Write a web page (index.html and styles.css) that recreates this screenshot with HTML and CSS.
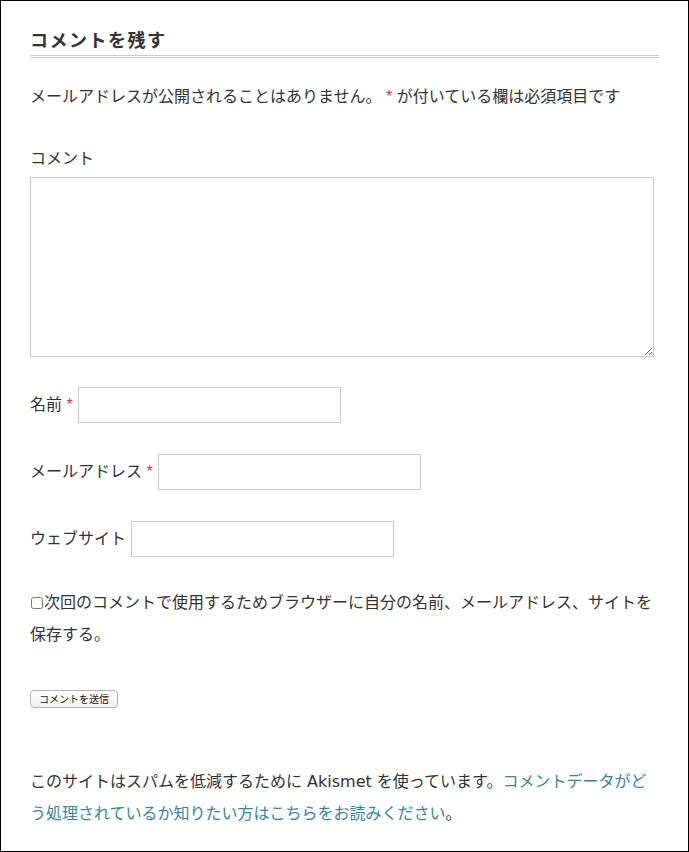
FILE: index.html
```html
<!DOCTYPE html>
<html lang="ja">
<head>
    <meta charset="UTF-8">
    <meta name="viewport" content="width=device-width, initial-scale=1.0">
    <title>コメントを残す</title>
    <link rel="stylesheet" href="styles.css">
</head>
<body>
    <div class="page">
        <div class="comment-respond">
            <h3 class="reply-title">コメントを残す</h3>

            <form class="comment-form" action="#" method="post">
                <p class="comment-notes">
                    <span>メールアドレスが公開されることはありません。</span> <span class="required">*</span> が付いている欄は必須項目です
                </p>

                <label class="comment-label" for="comment">コメント</label>
                <textarea class="comment-text" id="comment" name="comment"></textarea>

                <div class="field field-author">
                    <label for="author">名前 <span class="required">*</span></label>
                    <input type="text" id="author" name="author">
                </div>

                <div class="field field-email">
                    <label for="email">メールアドレス <span class="required">*</span></label>
                    <input type="text" id="email" name="email">
                </div>

                <div class="field field-url">
                    <label for="url">ウェブサイト</label>
                    <input type="text" id="url" name="url">
                </div>

                <p class="cookies-consent">
                    <input type="checkbox" id="cookies" name="cookies"><label for="cookies">次回のコメントで使用するためブラウザーに自分の名前、メールアドレス、サイトを保存する。</label>
                </p>

                <div class="form-submit">
                    <button type="submit" class="submit-btn">コメントを送信</button>
                </div>
            </form>

            <p class="akismet-notice">このサイトはスパムを低減するために Akismet を使っています。<a href="#">コメントデータがどう処理されているか知りたい方はこちらをお読みください</a>。</p>
        </div>
    </div>
</body>
</html>
```

FILE: styles.css
```css
* {
    margin: 0;
    padding: 0;
    box-sizing: border-box;
}

body {
    background: #fff;
    color: #333;
    font-family: 'Liberation Sans', 'Noto Sans CJK JP', sans-serif;
    font-size: 16px;
    line-height: 32px;
}

.page {
    height: 852px;
    border: 1px solid #000;
    padding: 27px 29px 0;
}

.reply-title {
    font-size: 18px;
    font-weight: bold;
    line-height: 27px;
    letter-spacing: 1.5px;
    color: #333;
    padding-bottom: 0;
    border-bottom: 3px double #ccc;
}

.comment-form {
    display: flex;
    flex-direction: column;
    align-items: flex-start;
}

.comment-notes {
    margin-top: 23px;
}

.required {
    color: #dd3344;
}

.comment-label {
    display: block;
    margin-top: 30px;
}

.comment-text {
    display: block;
    width: 624px;
    height: 180px;
    margin-top: 2px;
    border: 1px solid #ccc;
    font-family: inherit;
    font-size: 14px;
}

.field {
    display: flex;
    align-items: center;
    gap: 5px;
    margin-top: 31px;
}

.field-author {
    margin-top: 30px;
}

.field input {
    width: 263px;
    height: 36px;
    border: 1px solid #ccc;
    font-size: 14px;
    padding: 0 6px;
}

.cookies-consent {
    margin-top: 30px;
}

.cookies-consent input {
    width: 12px;
    height: 12px;
    margin: 0 1px 0 1px;
    vertical-align: -1px;
}

.form-submit {
    margin-top: 39px;
}

.submit-btn {
    display: block;
    height: 18px;
    padding: 0 8px;
    background: linear-gradient(#fff, #f2f2f2);
    border: 1px solid #b4b4b4;
    border-radius: 4px;
    font-family: 'Noto Sans CJK JP', sans-serif;
    font-size: 10px;
    line-height: 16px;
    color: #111;
}

.akismet-notice {
    margin-top: 58px;
    font-family: 'DejaVu Sans', 'Noto Sans CJK JP', sans-serif;
}

.akismet-notice a {
    color: #33879b;
    text-decoration: none;
}
```
